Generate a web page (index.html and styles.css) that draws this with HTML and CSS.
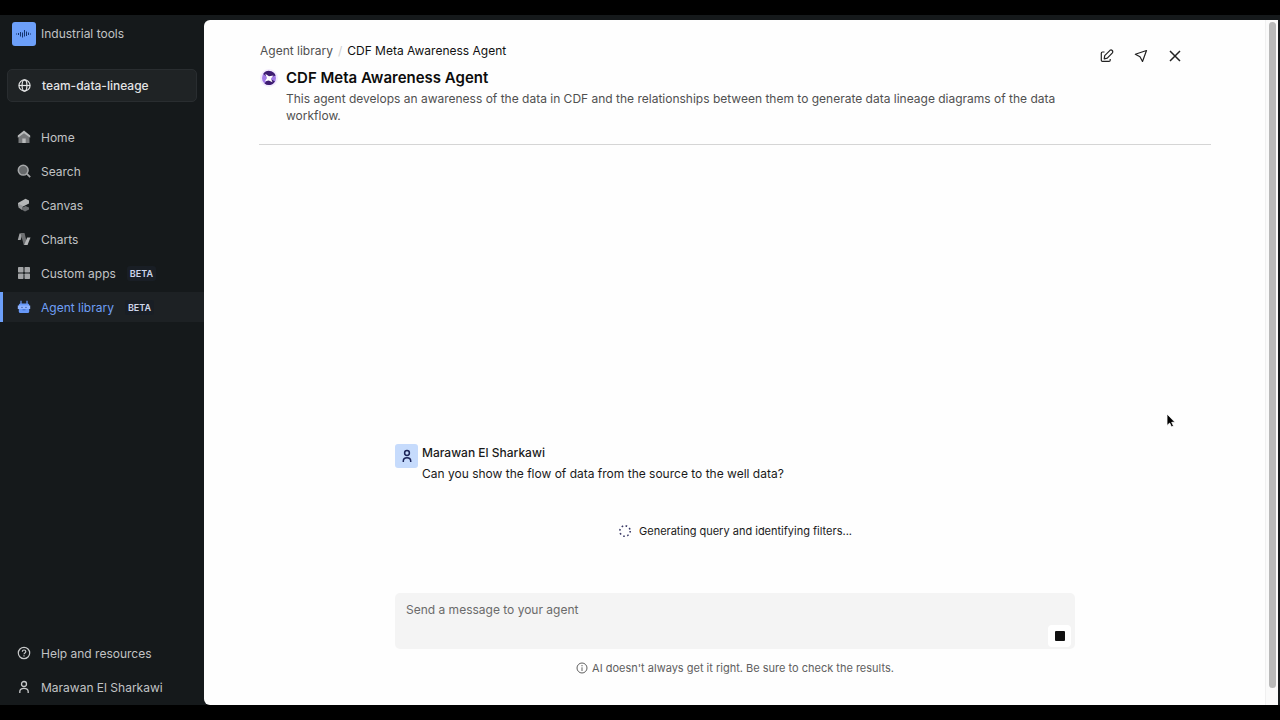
FILE: index.html
```html
<!DOCTYPE html>
<html lang="en">
<head>
<meta charset="utf-8">
<meta name="viewport" content="width=device-width, initial-scale=1">
<title>CDF Meta Awareness Agent</title>
<link rel="stylesheet" href="styles.css">
</head>
<body>
<div class="app">
  <aside class="sidebar">
    <div class="brand">
      <span class="brand-logo">
        <svg width="16" height="12" viewBox="0 0 16 12" fill="#16356f"><path d="M0 5.500h1v1H0zM2 5h1v2H2zM4 4h1v4.500H4zM6 4.500h1v5H6zM8 2h1v6.500H8zM10 3.500h1V8h-1zM12 4.500h1V7h-1zM14 5.500h1v1h-1z"/></svg>
      </span>
      <span>Industrial tools</span>
    </div>
    <button class="project" type="button">
      <svg width="13" height="13" viewBox="0 0 14 14" fill="none" stroke="currentColor" stroke-width="1.300"><circle cx="7" cy="7" r="6"/><ellipse cx="7" cy="7" rx="2.600" ry="6"/><path d="M1 7h12"/></svg>
      <span>team-data-lineage</span>
    </button>
    <nav class="nav">
      <a class="nav-item" href="#">
        <svg class="nav-icon" viewBox="0 0 14 14"><path fill="#77797b" d="M1.500 6L7 2l5.500 4v7h-11z"/><path fill="#b9bbbc" d="M7 .5L.8 5.500v2.300L7 3.200l6.200 4.600V5.500zM5.300 8.500h3.400V13H5.300z"/></svg>
        <span>Home</span>
      </a>
      <a class="nav-item" href="#">
        <svg class="nav-icon" viewBox="0 0 14 14"><circle cx="6.200" cy="6.200" r="4.900" fill="#66696b" stroke="#a5a7a9" stroke-width="1.500"/><path d="M9.700 9.700l3.500 3.500" stroke="#a5a7a9" stroke-width="1.800"/></svg>
        <span>Search</span>
      </a>
      <a class="nav-item" href="#">
        <svg class="nav-icon" viewBox="0 0 14 14"><path fill="#b4b6b7" d="M1 5L8.500 .8 12 2.500v3L6 8.500 1 7.500z"/><path fill="#97999b" d="M1 5.500L6 8l-1 4-3.500-2.500z"/><path fill="#6b6e70" d="M5.500 9.500L8.500 8l3.500 1.500v2L8 13.500l-3.500-2z"/></svg>
        <span>Canvas</span>
      </a>
      <a class="nav-item" href="#">
        <svg class="nav-icon" viewBox="0 0 14 14"><path fill="#a0a2a4" d="M.8 8L2.500 1.500h3L3.700 8z"/><path fill="#6d6f71" d="M3.500 1h4L10.500 13H6.800z"/><path fill="#b4b6b7" d="M7.200 13l3-7.500h3.300L10.500 13z"/></svg>
        <span>Charts</span>
      </a>
      <a class="nav-item" href="#">
        <svg class="nav-icon" viewBox="0 0 14 14" fill="#a2a4a6"><rect x="1" y="1" width="5.500" height="5.500" rx=".7"/><rect x="7.500" y="1" width="5.500" height="5.500" rx=".7"/><rect x="1" y="7.500" width="5.500" height="5.500" rx=".7"/><rect x="7.500" y="7.500" width="5.500" height="5.500" rx=".7"/></svg>
        <span>Custom apps</span><span class="badge">BETA</span>
      </a>
      <a class="nav-item active" href="#" aria-current="page">
        <svg class="nav-icon" viewBox="0 0 14 14"><path d="M4 .8V4M10 .8V4" stroke="#6392f0" stroke-width="1.300"/><rect x="1.800" y="3.500" width="10.400" height="9.500" rx="1.500" fill="#6798f8"/><path fill="#8fb3ff" d="M.8 5.500h12.400V9H.8z"/><circle cx="5" cy="7.300" r=".6" fill="#173a82"/><circle cx="9" cy="7.300" r=".6" fill="#173a82"/><path d="M5.500 9.800h3" stroke="#3c68bd" stroke-width=".8"/></svg>
        <span>Agent library</span><span class="badge">BETA</span>
      </a>
    </nav>
    <nav class="nav nav-bottom">
      <a class="nav-item" href="#">
        <svg class="nav-icon" viewBox="0 0 14 14" fill="none" stroke="#c7c9ca" stroke-width="1.200"><circle cx="7" cy="7" r="5.700"/><path d="M5.300 5.700c0-2.300 3.500-2.200 3.500-.1C8.800 7 7 6.900 7 8.300M7 9.300v1.200"/></svg>
        <span>Help and resources</span>
      </a>
      <a class="nav-item" href="#">
        <svg class="nav-icon" viewBox="0 0 14 14" fill="none" stroke="#c7c9ca" stroke-width="1.300"><circle cx="7" cy="4" r="2.500"/><path d="M2.800 13v-1.200c0-4.700 8.400-4.700 8.400 0V13"/></svg>
        <span>Marawan El Sharkawi</span>
      </a>
    </nav>
  </aside>

  <main class="panel">
    <div class="content">
      <header class="head">
        <div class="head-text">
          <div class="crumbs"><a href="#">Agent library</a><span class="slash">/</span><span class="here">CDF Meta Awareness Agent</span></div>
          <div class="agent">
            <svg class="agent-logo" width="18" height="18" viewBox="0 0 18 18"><circle cx="9" cy="9" r="9" fill="#f3ecfc"/><circle cx="9" cy="9" r="7" fill="#a27be6"/><path fill="#3d1c70" d="M3.200 5A7 7 0 0 1 15.600 6.500L9 9zM15 12.600A7 7 0 0 1 4.500 14.400L9 9z"/><path fill="#fff" d="M5.200 4.800L9 7.200l4.500-.7L11 9.500l1.500 3.800-3.700-1.800-3.800.8 2-3.300z"/></svg>
            <div>
              <h1>CDF Meta Awareness Agent</h1>
              <p>This agent develops an awareness of the data in CDF and the relationships between them to generate data lineage diagrams of the data workflow.</p>
            </div>
          </div>
        </div>
        <div class="actions">
          <button class="icon-btn" type="button" aria-label="Edit"><svg width="14" height="14" viewBox="0 0 14 14" fill="none" stroke="currentColor" stroke-width="1.200" stroke-linejoin="round"><path d="M4.500 3H2.500q-1.200 0-1.200 1.200v7q0 1.200 1.200 1.200h6.500q1.200 0 1.200-1.200V10"/><path d="M4.200 9.800l.5-3.200L10 1.300q1.200-.8 2.200.2 1 1.200.2 2.300L7.300 9.100z"/></svg></button>
          <button class="icon-btn" type="button" aria-label="Share"><svg width="14" height="14" viewBox="0 0 14 14" fill="none" stroke="currentColor" stroke-width="1.200" stroke-linejoin="round"><path d="M1.300 5.200L12.500 1.500 8.500 12.500 6 7.800z"/></svg></button>
          <button class="icon-btn" type="button" aria-label="Close"><svg width="14" height="14" viewBox="0 0 14 14" fill="none" stroke="currentColor" stroke-width="1.500"><path d="M2 2l10 10M12 2L2 12"/></svg></button>
        </div>
      </header>

      <section class="chat">
        <div class="message">
          <span class="avatar"><svg width="14" height="14" viewBox="0 0 14 14" fill="none" stroke="currentColor" stroke-width="1.500"><circle cx="7" cy="4" r="2.400"/><path d="M3.300 13v-1c0-4.500 7.400-4.500 7.400 0v1"/></svg></span>
          <div>
            <div class="author">Marawan El Sharkawi</div>
            <div class="text">Can you show the flow of data from the source to the well data?</div>
          </div>
        </div>
        <div class="status" role="status">
          <svg width="14" height="14" viewBox="0 0 14 14" fill="none" stroke-width="1.600"><circle cx="7" cy="7" r="5.200" stroke="#3c3c68" stroke-dasharray="1.600 2.484"/></svg>
          <span>Generating query and identifying filters...</span>
        </div>
        <div class="composer">
          <textarea aria-label="Message" placeholder="Send a message to your agent" rows="2"></textarea>
          <button class="stop" type="button" aria-label="Stop generating"><span></span></button>
        </div>
        <div class="note">
          <svg width="12" height="12" viewBox="0 0 12 12" fill="none" stroke="currentColor"><circle cx="6" cy="6" r="5"/><path d="M6 5.300V9M6 3v1.300"/></svg>
          <span>AI doesn't always get it right. Be sure to check the results.</span>
        </div>
      </section>
    </div>
    <div class="track"><div class="thumb"></div></div>
  </main>
  <svg class="cursor" width="12" height="16" viewBox="0 0 12 16"><path d="M1 1v11.500l2.700-2.400L5.500 14l2-1-1.800-3.700H9z" fill="#000" stroke="#fff" stroke-width=".8"/></svg>
</div>
</body>
</html>
```
FILE: styles.css
```css
* { box-sizing: border-box; }
body {
  margin: 0;
  background: #000;
  font: 12px/18px Inter, "Liberation Sans", sans-serif;
}
a { color: inherit; text-decoration: none; }
button { font: inherit; border: 0; padding: 0; cursor: pointer; }
.app {
  position: relative;
  display: flex;
  height: 100vh;
  padding: 15px 0;
}
.app::before {
  content: "";
  position: absolute;
  inset: 15px 0 15px 0;
  background: #15191b;
}
.sidebar {
  position: relative;
  display: flex;
  flex-direction: column;
  width: 204px;
  flex: none;
  padding: 7px 0 3px;
  color: #c1c3c5;
}
.brand {
  display: flex;
  align-items: center;
  gap: 5px;
  padding-left: 12px;
}
.brand-logo {
  display: grid;
  place-items: center;
  width: 24px;
  height: 24px;
  border-radius: 3px;
  background: #6c9ff9;
}
.project {
  display: flex;
  align-items: center;
  gap: 11px;
  height: 33px;
  margin: 23px 7px 20px;
  padding: 0 10px;
  border: 1px solid #292d30;
  border-radius: 5px;
  background: #1f2325;
  color: #e3e4e5;
  font-weight: 500;
}
.nav { display: flex; flex-direction: column; gap: 4px; }
.nav-bottom { margin-top: auto; }
.nav-item {
  display: flex;
  align-items: center;
  height: 30px;
  padding-left: 17px;
  line-height: 19px;
}
.nav-icon { width: 14px; height: 14px; margin-right: 10px; }
.active {
  background: #1d2124;
  color: #6f9ff5;
  box-shadow: inset 3px 0 #6c9ff9;
}
.badge {
  margin-left: 11px;
  padding: 0 3px;
  border-radius: 3px;
  background: #191e25;
  color: #ced6eb;
  font-size: 9px;
  line-height: 15px;
  font-weight: 600;
}
.panel {
  position: relative;
  display: flex;
  flex: 1;
  min-width: 0;
  margin: 5px 2px 0 0;
  border-radius: 6px 0 0 6px;
  overflow: hidden;
  background: #fefefe;
}
.content {
  display: flex;
  flex-direction: column;
  flex: 1;
  min-width: 0;
  padding: 22px 54px 28px 55px;
}
.head {
  display: flex;
  justify-content: space-between;
  padding-bottom: 20px;
  border-bottom: 1px solid #d5d5d5;
}
.head-text { max-width: 800px; padding-left: 1px; }
.crumbs { display: flex; gap: 5px; color: #505050; }
.slash { color: #cfcfcf; }
.here { color: #111; }
.agent { display: flex; gap: 8px; padding-top: 6px; }
.agent-logo { flex: none; margin-top: 3px; }
h1 { margin: 0; font-size: 15px; line-height: 24px; font-weight: 600; color: #0c0c0c; }
p { margin: 0; line-height: 17px; color: #505050; }
.actions { display: flex; gap: 10px; padding: 2px 24px 0 0; }
.icon-btn {
  display: grid;
  place-items: center;
  width: 24px;
  height: 24px;
  background: none;
  color: #222;
}
.chat {
  display: flex;
  flex-direction: column;
  justify-content: flex-end;
  flex: 1;
  width: 100%;
  max-width: 680px;
  margin: 0 auto;
}
.message { display: flex; gap: 4px; color: #1a1a1a; }
.avatar {
  display: grid;
  place-items: center;
  width: 23px;
  height: 24px;
  border-radius: 3px;
  background: #c6dbfc;
  color: #1b2459;
}
.author { font-weight: 500; }
.text { margin-top: 3px; }
.status {
  display: flex;
  align-items: center;
  justify-content: center;
  gap: 7px;
  padding: 39px 0 53px;
  font-size: 11px;
  color: #1a1a1a;
}
.composer { position: relative; display: flex; }
textarea {
  width: 100%;
  height: 56px;
  padding: 8px 11px;
  border: 0;
  border-radius: 5px;
  resize: none;
  background: #f4f4f4;
  color: #1a1a1a;
  font: inherit;
}
textarea::placeholder { color: #6a6a6a; opacity: 1; }
.stop {
  position: absolute;
  right: 4px;
  bottom: 2px;
  display: grid;
  place-items: center;
  width: 23px;
  height: 22px;
  border-radius: 4px;
  background: #fff;
}
.stop span { width: 10px; height: 10px; border-radius: 1px; background: #111; }
.note {
  display: flex;
  align-items: center;
  justify-content: center;
  gap: 4px;
  padding-top: 10px;
  font-size: 11px;
  color: #606060;
}
.track {
  width: 13px;
  padding: 2px 2px 17px 3px;
  border-left: 1px solid #f0f0f0;
  background: #fafafa;
}
.thumb { height: 100%; border-radius: 4px; background: #b9b9b9; }
.cursor { position: absolute; left: 1166px; top: 413px; }
```
